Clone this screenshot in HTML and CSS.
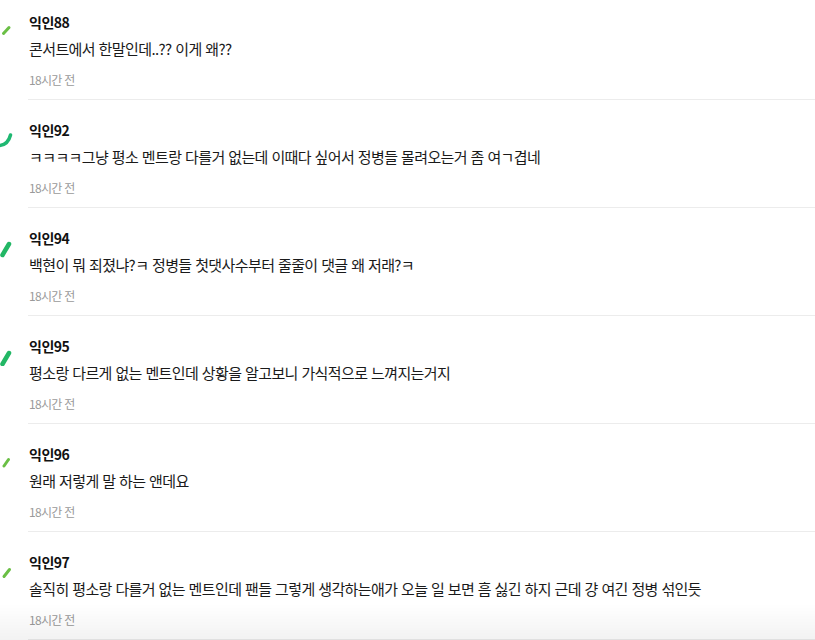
FILE: index.html
```html
<!DOCTYPE html>
<html lang="ko">
<head>
    <meta charset="UTF-8">
    <meta name="viewport" content="width=device-width, initial-scale=1.0">
    <title>댓글</title>
    <link rel="stylesheet" href="styles.css">
</head>
<body>
    <div class="comments">
        <div class="comment">
            <div class="comment-side">
                <svg width="14" height="18" viewBox="0 0 14 18"><path d="M3.5 9.5 L9 3.5" stroke="#6abf45" stroke-width="3" stroke-linecap="round" fill="none"/></svg>
            </div>
            <div class="comment-body">
                <div class="comment-name">익인88</div>
                <div class="comment-text">콘서트에서 한말인데..?? 이게 왜??</div>
                <div class="comment-time">18시간 전</div>
            </div>
        </div>

        <div class="comment">
            <div class="comment-side">
                <svg width="14" height="18" viewBox="0 0 14 18"><path d="M-1 13.5 Q8 13 10.5 3" stroke="#1fb872" stroke-width="3.5" stroke-linecap="round" fill="none"/></svg>
            </div>
            <div class="comment-body">
                <div class="comment-name">익인92</div>
                <div class="comment-text">ㅋㅋㅋㅋ그냥 평소 멘트랑 다를거 없는데 이때다 싶어서 정병들 몰려오는거 좀 여ㄱ겹네</div>
                <div class="comment-time">18시간 전</div>
            </div>
        </div>

        <div class="comment">
            <div class="comment-side">
                <svg width="14" height="18" viewBox="0 0 14 18"><path d="M2.5 15 L9 4" stroke="#22b765" stroke-width="4.5" stroke-linecap="round" fill="none"/></svg>
            </div>
            <div class="comment-body">
                <div class="comment-name">익인94</div>
                <div class="comment-text">백현이 뭐 죄졌냐?ㅋ 정병들 첫댓사수부터 줄줄이 댓글 왜 저래?ㅋ</div>
                <div class="comment-time">18시간 전</div>
            </div>
        </div>

        <div class="comment">
            <div class="comment-side">
                <svg width="14" height="18" viewBox="0 0 14 18"><path d="M2.5 16 L9 5" stroke="#22b765" stroke-width="4.5" stroke-linecap="round" fill="none"/></svg>
            </div>
            <div class="comment-body">
                <div class="comment-name">익인95</div>
                <div class="comment-text">평소랑 다르게 없는 멘트인데 상황을 알고보니 가식적으로 느껴지는거지</div>
                <div class="comment-time">18시간 전</div>
            </div>
        </div>

        <div class="comment">
            <div class="comment-side">
                <svg width="14" height="18" viewBox="0 0 14 18"><path d="M4 10 L8.5 3.5" stroke="#6abf45" stroke-width="3" stroke-linecap="round" fill="none"/></svg>
            </div>
            <div class="comment-body">
                <div class="comment-name">익인96</div>
                <div class="comment-text">원래 저렇게 말 하는 앤데요</div>
                <div class="comment-time">18시간 전</div>
            </div>
        </div>

        <div class="comment">
            <div class="comment-side">
                <svg width="14" height="18" viewBox="0 0 14 18"><path d="M4 12.5 L9.5 5.5" stroke="#6abf45" stroke-width="3" stroke-linecap="round" fill="none"/></svg>
            </div>
            <div class="comment-body">
                <div class="comment-name">익인97</div>
                <div class="comment-text">솔직히 평소랑 다를거 없는 멘트인데 팬들 그렇게 생각하는애가 오늘 일 보면 흠 싫긴 하지 근데 걍 여긴 정병 섞인듯</div>
                <div class="comment-time">18시간 전</div>
            </div>
        </div>
    </div>

    <div class="bottom-fade"></div>
</body>
</html>
```

FILE: styles.css
```css
* {
    margin: 0;
    padding: 0;
    box-sizing: border-box;
}

body {
    font-family: "Noto Sans CJK KR", "Noto Sans", sans-serif;
    background: #fff;
    color: #111;
    overflow: hidden;
}

.comment {
    display: flex;
}

.comment-side {
    width: 28px;
    flex-shrink: 0;
    padding-top: 32px;
}

.comment-side svg {
    display: block;
}

.comment:first-child .comment-side {
    padding-top: 24px;
}

.comment-body {
    flex: 1;
    padding: 20px 0 10px 1px;
    border-bottom: 1px solid #ececec;
}

.comment:first-child .comment-body {
    padding-top: 12px;
}

.comment-name {
    font-size: 14px;
    font-weight: 700;
    line-height: 20px;
    letter-spacing: -0.5px;
    color: #111;
}

.comment-text {
    margin-top: 5px;
    font-size: 15px;
    line-height: 22px;
    letter-spacing: -0.6px;
    color: #1a1a1a;
    padding-top: 1px;
}

.comment-time {
    margin-top: 11px;
    font-size: 12px;
    line-height: 18px;
    letter-spacing: -0.7px;
    color: #9a9a9a;
}

.bottom-fade {
    position: fixed;
    left: 0;
    right: 0;
    bottom: 0;
    height: 36px;
    background: linear-gradient(to bottom, rgba(0, 0, 0, 0), rgba(0, 0, 0, 0.05));
    pointer-events: none;
}
```
